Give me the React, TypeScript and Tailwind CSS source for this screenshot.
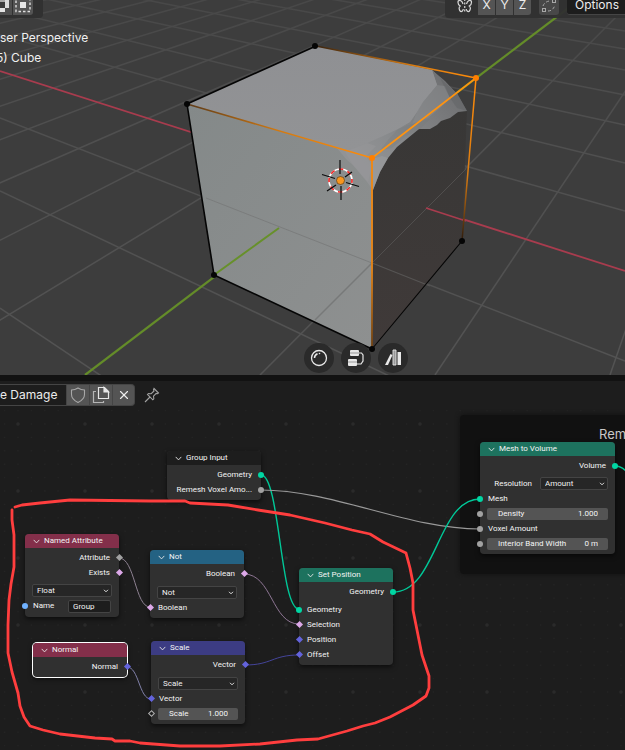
import React from "react";
import { X } from "lucide-react";

type SocketKind = "geometry" | "float" | "boolean" | "vector" | "string" | "any" | "empty";

// Diamonds are field sockets, circles are single values
const SOCKET_STYLES: Record<SocketKind, string> = {
  geometry: "size-[6px] rounded-full bg-[#00d6a3]",
  float: "size-[6px] rounded-full bg-[#a1a1a1]",
  string: "size-[6px] rounded-full bg-[#70b2ff]",
  any: "size-[5px] rotate-45 bg-[#a1a1a1]",
  boolean: "size-[5px] rotate-45 bg-[#dca8e8]",
  vector: "size-[5px] rotate-45 bg-[#6363dc]",
  empty: "size-[5px] rotate-45 border border-[#b0b0b0] bg-[#1d1d1d]",
};

const Socket = ({ kind, side }: { kind: SocketKind; side: "left" | "right" }) => (
  <span
    className={`absolute top-0 flex h-[15px] w-2 items-center justify-center ${side === "left" ? "-left-1" : "-right-1"}`}
  >
    <span className={`block shrink-0 ${SOCKET_STYLES[kind]}`} />
  </span>
);

const Output = ({ label, kind }: { label: string; kind: SocketKind }) => (
  <div className="relative flex h-[15px] items-center justify-end pr-[9px] whitespace-nowrap">
    {label}
    <Socket kind={kind} side="right" />
  </div>
);

const Input = ({ label, kind }: { label: string; kind: SocketKind }) => (
  <div className="relative flex h-[15px] items-center pl-2 whitespace-nowrap">
    {label}
    <Socket kind={kind} side="left" />
  </div>
);

const Dropdown = ({ id, value, label }: { id: string; value: string; label?: string }) => (
  <div className="flex h-[15px] items-center gap-2 px-[7px]">
    {label && (
      <label htmlFor={id} className="flex-1 text-right">
        {label}
      </label>
    )}
    <div className={`relative ${label ? "w-[68px]" : "flex-1"}`}>
      <select
        id={id}
        aria-label={label ?? value}
        className="block h-[13px] w-full appearance-none rounded-[2px] border border-[#444444] bg-[#262626] pl-1 text-[#f0f0f0] outline-none"
      >
        <option>{value}</option>
      </select>
      <svg viewBox="0 0 6 4" className="pointer-events-none absolute top-[5px] right-[3px] h-1 w-[6px]">
        <path d="M1 .8 3 2.8 5 .8" fill="none" stroke="#e0e0e0" strokeWidth="1" />
      </svg>
    </div>
  </div>
);

const NumberField = ({ id, label, value, kind }: { id: string; label: string; value: string; kind: SocketKind }) => (
  <div className="relative flex h-[15px] items-center px-[7px]">
    <div className="flex h-3 flex-1 items-center rounded-[2px] bg-[#545454] pr-[10px] pl-[11px]">
      <label htmlFor={id} className="whitespace-nowrap">
        {label}
      </label>
      <input id={id} defaultValue={value} className="h-3 w-full min-w-0 flex-1 bg-transparent text-right outline-none" />
    </div>
    <Socket kind={kind} side="left" />
  </div>
);

interface NodeProps {
  title: string;
  place: string;
  color: string;
  selected?: boolean;
  children: React.ReactNode;
}

const Node = ({ title, place, color, selected, children }: NodeProps) => (
  <section
    className={`absolute rounded-[4px] bg-[#303030] shadow-[0_2px_5px_rgba(0,0,0,0.6)] ${selected ? "ring-1 ring-white" : ""} ${place}`}
  >
    <h2 className={`h-[14px] rounded-t-[4px] ${color}`}>
      <button type="button" className="flex h-[14px] w-full items-center gap-1 pl-2 whitespace-nowrap">
        <svg viewBox="0 0 7 5" className="h-[5px] w-[7px]">
          <path d="M.7.9 3.5 3.9 6.3.9" fill="none" stroke="#e6e6e6" strokeWidth=".9" />
        </svg>
        {title}
      </button>
    </h2>
    <div className="pt-[2px] pb-[3px]">{children}</div>
  </section>
);

// Floor lines running along X as [y at left edge, y at right edge]
const X_LINES = [
  [308, 727], [191, 488], [118, 361], [35, 211], [9, 163], [-11, 125],
  [-29, 95], [-44, 70], [-57, 49], [-67, 31], [-77, 16],
];

// Floor lines running along Y, as the x where they leave the bottom edge
const Y_LINES = [610, 435, 260, -90, -265, -440, -615, -790, -965, -1140, -1315, -1490, -1665, -1840, -2015];

const Scene = () => (
  <svg viewBox="0 0 625 375" className="absolute top-0 left-0 h-[375px] w-[625px]" aria-label="Cube">
    <defs>
      <linearGradient id="floor-line" x1="0" y1="0" x2="0" y2="375" gradientUnits="userSpaceOnUse">
        <stop offset="0" stopColor="#484848" />
        <stop offset=".35" stopColor="#4f4f4f" />
        <stop offset="1" stopColor="#535353" />
      </linearGradient>
      <linearGradient id="left-face" x1="0" y1="0" x2="1" y2="1">
        <stop offset="0" stopColor="#848989" />
        <stop offset="1" stopColor="#8e9090" />
      </linearGradient>
      <linearGradient id="top-face" x1="0" y1="0" x2="0" y2="1">
        <stop offset="0" stopColor="#8f9093" />
        <stop offset="1" stopColor="#929395" />
      </linearGradient>
      <linearGradient id="right-face" x1="0" y1="0" x2="0" y2="1">
        <stop offset="0" stopColor="#383736" />
        <stop offset="1" stopColor="#403a39" />
      </linearGradient>
      <linearGradient id="chip" x1="467" y1="85" x2="370" y2="170" gradientUnits="userSpaceOnUse">
        <stop offset="0" stopColor="#6b6c6e" />
        <stop offset=".4" stopColor="#7d7e80" />
        <stop offset=".7" stopColor="#888a8c" />
        <stop offset="1" stopColor="#929395" />
      </linearGradient>
      <linearGradient id="edge-front" x1="187" y1="104" x2="372" y2="158" gradientUnits="userSpaceOnUse">
        <stop offset="0" stopColor="#5c3a18" />
        <stop offset=".5" stopColor="#d27a12" />
        <stop offset="1" stopColor="#ff8c0a" />
      </linearGradient>
      <linearGradient id="edge-back" x1="316" y1="46" x2="476" y2="78" gradientUnits="userSpaceOnUse">
        <stop offset="0" stopColor="#3a2410" />
        <stop offset=".6" stopColor="#d87b10" />
        <stop offset="1" stopColor="#ff8c0a" />
      </linearGradient>
      <linearGradient id="edge-down" x1="0" y1="78" x2="0" y2="349" gradientUnits="userSpaceOnUse">
        <stop offset="0" stopColor="#ff8c0a" />
        <stop offset=".7" stopColor="#e58212" />
        <stop offset="1" stopColor="#6b3f12" />
      </linearGradient>
      <linearGradient id="edge-right" x1="0" y1="78" x2="0" y2="241" gradientUnits="userSpaceOnUse">
        <stop offset="0" stopColor="#ff8c0a" />
        <stop offset=".6" stopColor="#db7c12" />
        <stop offset="1" stopColor="#2a1a0c" />
      </linearGradient>
    </defs>

    <g stroke="url(#floor-line)" strokeWidth="1.5">
      {X_LINES.map(([left, right]) => (
        <line key={right} x1="0" y1={left} x2="625" y2={right} />
      ))}
      {Y_LINES.map((x) => (
        <line key={x} x1={x} y1="375" x2="797" y2="-165" />
      ))}
    </g>
    <line x1="0" y1="71" x2="625" y2="271" stroke="#a83c4e" strokeWidth="1.8" />
    <line x1="85" y1="375" x2="579" y2="0" stroke="#648c29" strokeWidth="2.2" />

    <path d="M187 104 316 46 432 70 458 95 437 120 400 140 373 185 372 349 214 275Z" fill="#8a8c8d" />
    <path d="M373 185 382 160 400 138 437 118 467 110 462 241 372 349Z" fill="url(#right-face)" />
    <path d="M187 104 337 148 353 165 373 190 372 349 214 275Z" fill="url(#left-face)" />
    <path
      d="M432 70 445 81 458 95 467 111 458 112 450 118 441 121 437 125 430 129 419 129 408 138 397 147 388 158 380 172 373 190 367 182 353 165 347 160 336 147 367 140 383 135 398 128 410 122 417 112 423 102 437 85Z"
      fill="url(#chip)"
    />
    <path d="M187 104 316 46 432 70 437 85 423 102 417 112 410 122 398 129 383 136 367 143 350 150 336 148Z" fill="url(#top-face)" />
    <path d="M437 85 445 86 450 98 440 108 428 118 412 124 417 112 423 102Z" fill="#8c8d8f" opacity=".5" />
    <path d="M440 78 458 95 467 111 457 108 450 98Z" fill="#606264" opacity=".45" />
    <path d="M398 129 412 124 430 119 420 129 406 136 392 148 380 150 388 140Z" fill="#747678" opacity=".25" />
    <path d="M345 152 367 143 376 146 366 156 372 166 368 182 353 165Z" fill="#98999b" opacity=".45" />
    <path d="M372 159 382 156 388 158 380 172 373 190Z" fill="#9b9c9e" opacity=".6" />

    <g stroke="#777979" strokeWidth=".8">
      <line x1="206" y1="198" x2="372" y2="263" />
      <line x1="315" y1="320" x2="372" y2="263" strokeWidth="1.4" />
      <line x1="372" y1="263" x2="466" y2="169" stroke="#565453" />
      <line x1="372" y1="263" x2="430" y2="286" stroke="#565453" strokeWidth="1.3" />
    </g>
    <line x1="214" y1="275" x2="279" y2="228" stroke="#67902a" strokeWidth="2" />
    <line x1="426" y1="208" x2="466" y2="221" stroke="#a83c4e" strokeWidth="1.8" />

    <g fill="none" strokeLinecap="round">
      <path d="M316 46 187 104 214 275 372 349" stroke="#050505" strokeWidth="1.6" />
      <path d="M372 349 462 241" stroke="#050505" strokeWidth="1.1" />
      <path d="M187 104 372 158" stroke="url(#edge-front)" strokeWidth="1.5" />
      <path d="M316 46 476 78" stroke="url(#edge-back)" strokeWidth="1.5" />
      <path d="M372 158V349" stroke="url(#edge-down)" strokeWidth="1.8" />
      <path d="M476 78 462 241" stroke="url(#edge-right)" strokeWidth="1.5" />
      <path d="M372 158 476 78" stroke="#ff930f" strokeWidth="1.6" />
    </g>
    <g fill="#050505">
      <circle cx="187" cy="104" r="3" />
      <circle cx="315" cy="46" r="3" />
      <circle cx="214" cy="275" r="3" />
      <circle cx="372" cy="349" r="3" />
      <circle cx="462" cy="241" r="3" />
    </g>
    <circle cx="372" cy="158" r="3" fill="#ff7f00" />
    <circle cx="476" cy="78" r="3" fill="#ff7f00" />

    {/* 3D cursor and origin */}
    <circle cx="340.5" cy="180.5" r="11.5" fill="none" stroke="#ffffff" strokeWidth="1.7" />
    <circle
      cx="340.5"
      cy="180.5"
      r="11.5"
      fill="none"
      stroke="#f02828"
      strokeWidth="1.7"
      strokeDasharray="4.5 4.53"
      strokeDashoffset="2"
    />
    <path
      d="M340 160v14M341 186v14M322 174.500l13 4M346 182.500l13 4M327 191l9-6M345 177l7-5"
      stroke="#0c0c0c"
      strokeWidth="1.2"
    />
    <circle cx="340.5" cy="180.5" r="4" fill="#f8961e" stroke="#4a3010" strokeWidth=".6" />
  </svg>
);

const ViewportButton = ({ label, children }: { label: string; children: React.ReactNode }) => (
  <button
    type="button"
    aria-label={label}
    className="flex size-[30px] items-center justify-center rounded-full bg-[#2a2a2a]"
  >
    <svg viewBox="0 0 18 18" className="size-[18px]">
      {children}
    </svg>
  </button>
);

const Viewport = () => (
  <div className="relative flex h-[375px] flex-col overflow-hidden bg-[#3d3d3d]">
    <Scene />
    <header className="relative flex h-[18px] items-start justify-between text-xs leading-[10px] text-[#ececec]">
      <div className="flex h-full items-start gap-px rounded-br-[4px] bg-[#303030]/95 pr-[10px]">
        <button type="button" aria-label="Extend selection" className="h-[15px] w-3 bg-[#4f4f4f]">
          <svg viewBox="0 5 12 15" className="h-[15px] w-3">
            <path d="M0 5h9v8H0z" fill="#a8a8a8" />
            <path d="M5 5h4v8H5z" fill="#dcdcdc" />
            <path d="M0 7h5v7H0z" fill="#3c3c3c" />
            <path d="M0 13h5v4H0z" fill="#e4e4e4" />
          </svg>
        </button>
        <button type="button" aria-label="Intersect selection" className="h-[15px] w-5 rounded-br-[3px] bg-[#545454]">
          <svg viewBox="0 5 20 15" className="h-[15px] w-5">
            <rect x="3" y="3.5" width="14" height="13" fill="none" stroke="#dedede" strokeWidth="1.4" strokeDasharray="2.5 2" />
            <rect x="7" y="7" width="6" height="6" fill="#e6e6e6" />
          </svg>
        </button>
      </div>
      <div className="flex h-full items-start rounded-bl-[4px] bg-[#303030]/95 pl-3">
        <svg viewBox="0 4 16 14" className="h-[14px] w-4" fill="none" stroke="#d8d8d8" strokeWidth="1.2">
          <path d="M6 8C5 5 3 3.500 1.200 5c-.5 2 .3 4 2 5-1.700 1.200-1.200 4 .3 5.500 1.500.5 2.500-1 2.800-2.500M9.500 8c1-3 3-4.500 4.800-3 .5 2-.3 4-2 5 1.700 1.200 1.200 4-.3 5.500-1.500.5-2.500-1-2.800-2.500" />
          <path d="M7.750 3v14" strokeDasharray="2 1.5" />
        </svg>
        <div className="mr-2 ml-[5px] flex gap-px">
          <button type="button" className="h-[15px] w-[17px] bg-[#545454] pb-[5px]">X</button>
          <button type="button" className="h-[15px] w-[17px] bg-[#545454] pb-[5px]">Y</button>
          <button type="button" className="h-[15px] w-[17px] rounded-br-[3px] bg-[#545454] pb-[5px]">Z</button>
        </div>
        <button type="button" aria-label="Auto merge" className="mr-2 h-[15px] w-5 rounded-b-[3px] bg-[#484848]">
          <svg viewBox="0 4 20 15" className="h-[15px] w-5" fill="none" stroke="#a8a8a8">
            <rect x="3.5" y="12.5" width="3" height="3" />
            <rect x="13.5" y="3.5" width="3" height="3" />
            <path d="M4 10C5 7 8 5 11 5M9 15c4 0 6-3 7-6" strokeDasharray="3 2" />
          </svg>
        </button>
        <button type="button" className="h-[15px] rounded-bl-[3px] border-b border-[#454545] bg-[#1d1d1d] pr-[6px] pb-1 pl-2">
          Options
        </button>
      </div>
    </header>

    <div className="relative pt-[10px] text-xs leading-5 text-[#f0f0f0]">
      <p>ser Perspective</p>
      <p className="-ml-1">5) Cube</p>
    </div>

    <div className="relative mt-auto mb-[2px] ml-[304px] flex gap-[7px]">
      <ViewportButton label="Material">
        <circle cx="9" cy="9" r="7.5" fill="none" stroke="#e8e8e8" strokeWidth="1.3" />
        <path d="M4.500 9c0-2 1-3.500 3-4.300" fill="none" stroke="#e8e8e8" strokeWidth="1.5" />
        <circle cx="9.5" cy="4.5" r=".8" fill="#e8e8e8" />
      </ViewportButton>
      <ViewportButton label="Geometry nodes">
        <rect x="3" y="1" width="9" height="6" rx="1" fill="#e8e8e8" />
        <rect x="1" y="10" width="9" height="7" rx="1" fill="#e8e8e8" />
        <path d="M3 4h9M1 13h9" stroke="#777" strokeWidth=".7" />
        <path d="M12 4h2.500L16 6v6l-2 3h-4" fill="none" stroke="#e8e8e8" strokeWidth="1.2" />
      </ViewportButton>
      <ViewportButton label="Asset library">
        <path d="M1 16 6.500 5l2 1L4 16Z" fill="#e8e8e8" />
        <path d="M9 1h3v15H9z" fill="#999" stroke="#e8e8e8" strokeWidth=".9" />
        <path d="M13.500 3H17v13h-3.500z" fill="#e8e8e8" />
      </ViewportButton>
    </div>
  </div>
);

const EditorHeader = () => (
  <header className="flex h-[28px] items-center gap-2 text-xs text-[#ececec]">
    <div className="flex h-[22px] items-stretch overflow-hidden rounded-r-[4px] border border-l-0 border-[#454545] bg-[#454545]">
      <input aria-label="Node tree name" defaultValue="e Damage" className="w-[66px] bg-[#1d1d1d] pr-2 outline-none" />
      <div className="flex gap-px pl-px">
        <button type="button" aria-label="Fake user" className="flex w-[22px] items-center justify-center bg-[#545454]">
          <svg viewBox="0 0 16 16" className="size-4" fill="none" stroke="#a8a8a8" strokeWidth="1.1">
            <path d="M8 1C6 2.300 4 3 1.500 3v4.500C1.500 11 4 13.500 8 15.500c4-2 6.500-4.500 6.500-8V3C12 3 10 2.300 8 1Z" />
          </svg>
        </button>
        <button type="button" aria-label="New node tree" className="flex w-[22px] items-center justify-center bg-[#545454]">
          <svg viewBox="0 0 18 18" className="size-[18px]" fill="none" stroke="#e6e6e6" strokeWidth="1.2">
            <path d="M6.500 1.500h6l4 4v7h-10Z" />
            <path d="M12 1.500V6h4.500Z" fill="#e6e6e6" />
            <path d="M4 5.500H1.500v11h10V15" stroke="#b5b5b5" />
          </svg>
        </button>
        <button type="button" aria-label="Unlink" className="flex w-[21px] items-center justify-center bg-[#545454]">
          <X size={14} strokeWidth={2} />
        </button>
      </div>
    </div>
    <button type="button" aria-label="Pin" className="p-px">
      <svg viewBox="0 0 16 16" className="size-4" fill="none" stroke="#a2a2a2" strokeWidth="1.1">
        <path d="M10 1.500 14.500 6l-1 .7-1.300-.3-2.700 2.800.3 2.600-1 1L3.500 7.500l1-1 2.700.2L10 4l-.5-1.300ZM6 10l-5 5" />
      </svg>
    </button>
  </header>
);

const Dots = () => (
  <svg viewBox="0 409 625 341" className="absolute top-0 left-0 h-[341px] w-[625px]">
    <defs>
      <pattern id="dots" x="16" y="422" width="67" height="67" patternUnits="userSpaceOnUse">
        {[0, 13.4, 26.8, 40.2, 53.6].map((y) =>
          [0, 13.4, 26.8, 40.2, 53.6].map((x) => (
            <circle key={`${x}-${y}`} cx={x + 2} cy={y + 2} r=".7" fill="#242424" />
          ))
        )}
        <circle cx="2" cy="2" r="1.7" fill="#2a2a2a" />
      </pattern>
    </defs>
    <rect x="0" y="409" width="625" height="341" fill="url(#dots)" />
  </svg>
);

const Links = () => (
  <svg viewBox="0 409 625 341" className="absolute top-0 left-0 h-[341px] w-[625px]" fill="none">
    <path d="M261 475C280 475 280 609 299 609" stroke="#00c898" strokeWidth="1.4" />
    <path d="M261 490C334 490 407 529 480 529" stroke="#999999" strokeWidth="1.2" />
    <path d="M393 592C437 592 437 499 480 499" stroke="#00c898" strokeWidth="1.4" />
    <path d="M615 466c12 0 14 14 26 14" stroke="#00c898" strokeWidth="1.4" />
    <path d="M119 558C135 558 135 607 150 607" stroke="#8d8191" />
    <path d="M244 574C272 574 272 624 299 624" stroke="#8d7593" />
    <path d="M127 667C139 667 139 699 151 699" stroke="#8080a8" />
    <path d="M245 665C272 665 272 655 299 655" stroke="#44449a" />
  </svg>
);

const Annotation = () => (
  <svg viewBox="0 409 625 341" className="pointer-events-none absolute top-0 left-0 h-[341px] w-[625px]">
    <path
      d="M15 507 22 505 40 503 50 502 70 500 150 501 185 501 190 503 228 505 258 510 290 515 325 523 352 530 370 534 383 542 406 553 410 568 413 583 413 610 417 630 422 655 429 676 429 688 426 696 413 705 390 717 375 723 363 726 347 731 318 739 297 740 260 744 220 746 180 746 140 743 130 741 115 741 112 739 95 738 60 734 43 730 30 726 24 717 20 706 18 693 12 672 8 653 8 625 9 600 11 584 14 567 14 535 12 520 12 510"
      fill="none"
      stroke="#ff3e3e"
      strokeWidth="2.8"
      strokeLinejoin="round"
      strokeLinecap="round"
    />
  </svg>
);

const NodeEditor = () => (
  <main className="relative h-[341px] overflow-hidden font-['Roboto',sans-serif] text-[8px] leading-[10px] text-[#f4f4f4]">
    <Dots />
    <div className="absolute top-[6px] -right-4 left-[460px] h-[159px] rounded-[4px] bg-[#111111] shadow-[0_0_5px_#111111]">
      <p className="pt-[11px] pl-[139px] font-['Inter',sans-serif] text-[13px] leading-4 text-[#c8c8c8]">Rem</p>
    </div>
    <Links />

    <Node title="Group Input" place="top-[42px] left-[167px] w-[94px]" color="bg-[#1d1d1d]">
      <Output label="Geometry" kind="geometry" />
      <Output label="Remesh Voxel Amo..." kind="float" />
    </Node>

    <Node title="Mesh to Volume" place="top-[33px] left-[480px] w-[135px]" color="bg-[#1d725e]">
      <Output label="Volume" kind="geometry" />
      <div className="pt-[3px]">
        <Dropdown id="resolution" label="Resolution" value="Amount" />
      </div>
      <Input label="Mesh" kind="geometry" />
      <NumberField id="density" label="Density" value="1.000" kind="float" />
      <Input label="Voxel Amount" kind="float" />
      <NumberField id="band-width" label="Interior Band Width" value="0 m" kind="float" />
    </Node>

    <Node title="Named Attribute" place="top-[125px] left-[25px] w-[94px]" color="bg-[#832f4a]">
      <Output label="Attribute" kind="any" />
      <Output label="Exists" kind="boolean" />
      <div className="pt-[3px]">
        <Dropdown id="data-type" value="Float" />
      </div>
      <div className="relative flex h-4 items-center justify-between pr-2 pl-2">
        <label htmlFor="attribute-name">Name</label>
        <input
          id="attribute-name"
          defaultValue="Group"
          className="h-[13px] w-[43px] rounded-[2px] border border-[#444444] bg-[#1d1d1d] pl-1 outline-none"
        />
        <Socket kind="string" side="left" />
      </div>
    </Node>

    <Node title="Not" place="top-[141px] left-[150px] w-[94px]" color="bg-[#246283]">
      <Output label="Boolean" kind="boolean" />
      <div className="pt-1">
        <Dropdown id="operation" value="Not" />
      </div>
      <Input label="Boolean" kind="boolean" />
    </Node>

    <Node title="Set Position" place="top-[159px] left-[299px] w-[94px]" color="bg-[#1d725e]">
      <Output label="Geometry" kind="geometry" />
      <div className="pt-[3px]">
        <Input label="Geometry" kind="geometry" />
      </div>
      <Input label="Selection" kind="boolean" />
      <Input label="Position" kind="vector" />
      <Input label="Offset" kind="vector" />
    </Node>

    <Node title="Normal" place="top-[234px] left-[33px] w-[94px]" color="bg-[#832f4a]" selected>
      <Output label="Normal" kind="vector" />
    </Node>

    <Node title="Scale" place="top-[232px] left-[151px] w-[94px]" color="bg-[#3c3c83]">
      <Output label="Vector" kind="vector" />
      <div className="pt-1">
        <Dropdown id="vector-operation" value="Scale" />
      </div>
      <Input label="Vector" kind="vector" />
      <NumberField id="scale" label="Scale" value="1.000" kind="empty" />
    </Node>

    <Annotation />
  </main>
);

export default function App() {
  return (
    <div className="min-h-screen overflow-hidden bg-[#1d1d1d] font-['Inter',sans-serif]">
      <Viewport />
      <div className="border-t-[6px] border-[#121212]">
        <EditorHeader />
        <NodeEditor />
      </div>
    </div>
  );
}
